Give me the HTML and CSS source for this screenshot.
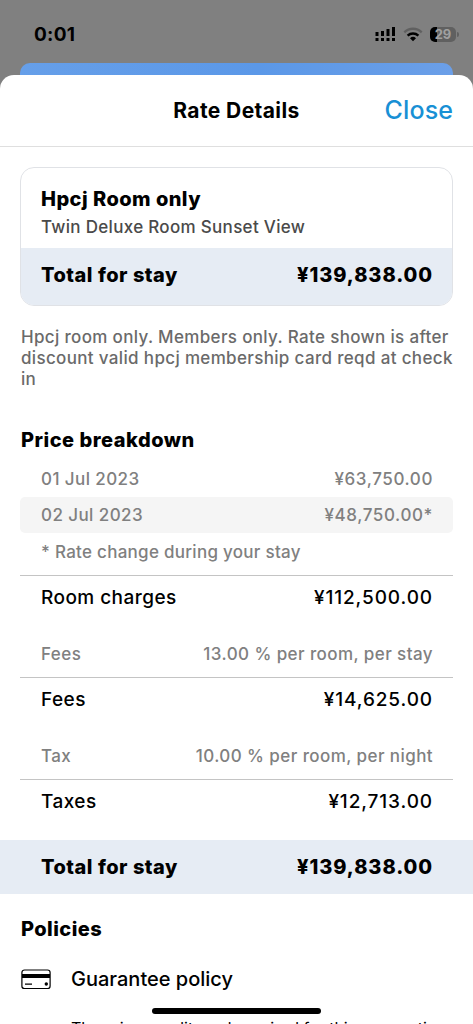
FILE: index.html
```html
<!DOCTYPE html>
<html lang="en">
<head>
    <meta charset="UTF-8">
    <meta name="viewport" content="width=device-width, initial-scale=1.0">
    <title>Rate Details</title>
    <link rel="stylesheet" href="styles.css">
</head>
<body>
    <div class="status-bar">
        <span class="clock">0:01</span>
        <div class="status-icons">
            <svg class="signal" width="21" height="15" viewBox="0 0 21 15">
                <path d="M0.5 5h3v4h-3zM6 4h3v5H6zM11.500 2h3v7h-3zM17 0h3v9h-3zM0.500 11h3v3h-3zM6 11h3v3H6zM11.500 11h3v3h-3zM17 11h3v3h-3z"/>
            </svg>
            <svg class="wifi" width="20" height="15" viewBox="0 0 20 15">
                <path class="wifi-off" d="M1.300 5.300a12.600 12.600 0 0 1 17.400 0"/>
                <path class="wifi-on" d="M4.600 8.600a7.900 7.900 0 0 1 10.800 0"/>
                <path d="M10 14.200l-3-3a4.300 4.300 0 0 1 6 0z"/>
            </svg>
            <div class="battery"><span class="battery-text">29</span></div>
        </div>
    </div>
    <div class="back-sheet"></div>

    <div class="sheet">
        <div class="header">
            <h1>Rate Details</h1>
            <a class="close">Close</a>
        </div>

        <div class="content">
            <div class="card">
                <div class="card-info">
                    <h2>Hpcj Room only</h2>
                    <p>Twin Deluxe Room Sunset View</p>
                </div>
                <div class="card-total">
                    <span>Total for stay</span>
                    <span class="price">¥139,838.00</span>
                </div>
            </div>

            <p class="description">Hpcj room only. Members only. Rate shown is after<br>discount valid hpcj membership card reqd at check<br>in</p>

            <h2 class="breakdown-title">Price breakdown</h2>
            <div class="row"><span>01 Jul 2023</span><span class="price">¥63,750.00</span></div>
            <div class="row shaded"><span>02 Jul 2023</span><span class="price">¥48,750.00*</span></div>
            <div class="row note"><span>* Rate change during your stay</span></div>
            <div class="row subtotal"><span>Room charges</span><span class="price">¥112,500.00</span></div>
            <div class="row detail"><span>Fees</span><span>13.00 % per room, per stay</span></div>
            <div class="row subtotal"><span>Fees</span><span class="price">¥14,625.00</span></div>
            <div class="row detail"><span>Tax</span><span>10.00 % per room, per night</span></div>
            <div class="row subtotal"><span>Taxes</span><span class="price">¥12,713.00</span></div>
        </div>

        <div class="grand-total">
            <span>Total for stay</span>
            <span class="price">¥139,838.00</span>
        </div>

        <div class="policies">
            <h2>Policies</h2>
            <div class="policy">
                <svg class="card-icon" width="30" height="21" viewBox="0 0 30 21">
                    <rect class="outline" x="0.900" y="1" width="28.200" height="18.500" rx="2.600"/>
                    <path d="M1 5h28v4H1zM4 14.500h7v1.200H4z"/>
                    <circle cx="25.300" cy="15" r="1.700"/>
                </svg>
                <div class="policy-text">
                    <h3>Guarantee policy</h3>
                    <p>There is a credit card required for this reservation</p>
                </div>
            </div>
        </div>
    </div>
    <div class="home-indicator"></div>
</body>
</html>
```
FILE: styles.css
```css
* {
  box-sizing: border-box;
}

body {
  margin: 0;
  height: 1024px;
  overflow: hidden;
  position: relative;
  background: #808080;
  color: #000;
  font-family: 'Inter', sans-serif;
  font-weight: 450;
  display: flex;
  flex-direction: column;
}

h1, h2, h3, p {
  margin: 0;
}

/* Status bar */
.status-bar {
  height: 63px;
  flex-shrink: 0;
  padding: 6px 14px 0 34px;
  display: flex;
  justify-content: space-between;
  align-items: center;
}

.clock {
  font-size: 19px;
  font-weight: 700;
  letter-spacing: 0.3px;
}

.status-icons {
  display: flex;
  align-items: center;
  gap: 7px;
}

.wifi-off, .wifi-on {
  fill: none;
  stroke: #000;
  stroke-width: 2.4;
}

.wifi-off {
  stroke: #606060;
}

.battery {
  position: relative;
  width: 26px;
  height: 15px;
  margin-right: 3px;
  border-radius: 5px;
  background: linear-gradient(90deg, #000 7px, #606060 7px);
  text-align: center;
}

.battery::after {
  content: "";
  position: absolute;
  right: -3px;
  top: 5px;
  width: 2px;
  height: 5px;
  border-radius: 0 2px 2px 0;
  background: #606060;
}

.battery-text {
  display: block;
  font-size: 13px;
  line-height: 15px;
  font-weight: 700;
  color: #a0a0a0;
}

/* Page behind the sheet */
.back-sheet {
  height: 30px;
  flex-shrink: 0;
  margin: 0 20px -18px;
  border-radius: 10px 10px 0 0;
  background: linear-gradient(90deg, #669fe9, #5b98e8 55%, #6b9fe8);
}

/* Sheet */
.sheet {
  flex: 1;
  min-height: 0;
  position: relative;
  overflow: hidden;
  border-radius: 14px 14px 0 0;
  background: #fff;
}

.header {
  height: 72px;
  border-bottom: 1px solid #dfdfdf;
  display: grid;
  grid-template-columns: 1fr auto 1fr;
  align-items: center;
  padding: 0 20px;
}

.header h1 {
  grid-column: 2;
  font-size: 21px;
  font-weight: 700;
  letter-spacing: 0.4px;
}

.close {
  justify-self: end;
  padding-bottom: 2px;
  font-size: 25px;
  letter-spacing: 0.1px;
  color: #1890d5;
}

.content {
  padding: 20px 20px 0;
}

.card {
  height: 139px;
  border: 1px solid #e0e2e6;
  border-radius: 14px;
  overflow: hidden;
}

.card-info {
  height: 80px;
  padding: 18px 20px 0;
}

h2 {
  font-size: 20px;
  line-height: 26px;
  font-weight: 800;
  letter-spacing: 0.45px;
}

.card-info p {
  font-size: 17px;
  line-height: 30px;
  letter-spacing: 0.31px;
  color: #4a4a4a;
}

.card-total, .grand-total {
  display: flex;
  justify-content: space-between;
  align-items: center;
  background: #e6ecf4;
  font-size: 20px;
  font-weight: 800;
  letter-spacing: 0.5px;
}

.card-total {
  height: 57px;
  padding: 0 19px 3px 20px;
}

.description {
  margin: 21px 0 0 1px;
  font-size: 17px;
  line-height: 21px;
  letter-spacing: 0.34px;
  color: #6a6a6a;
  white-space: nowrap;
}

.breakdown-title {
  margin: 37px 0 8px 1px;
  letter-spacing: 0.5px;
}

/* Price rows */
.row {
  height: 36px;
  padding: 0 20px 0 21px;
  display: flex;
  justify-content: space-between;
  align-items: center;
  font-size: 17px;
  letter-spacing: 0.42px;
  color: #808080;
  white-space: nowrap;
}

.price {
  letter-spacing: 0.6px;
}

.shaded {
  background: #f5f5f5;
  border-radius: 5px;
}

.note {
  height: 42px;
  padding-bottom: 5px;
  letter-spacing: 0.28px;
}

.subtotal {
  height: 43px;
  border-top: 1px solid #c4c4c4;
  font-size: 19px;
  font-weight: 500;
  letter-spacing: 0.45px;
  color: #000;
}

.subtotal .price, .card-total .price, .grand-total .price {
  letter-spacing: 0.9px;
}

.detail {
  height: 59px;
  padding-top: 12px;
}

.grand-total {
  height: 54px;
  margin-top: 18px;
  padding: 0 40px 0 41px;
}

/* Policies */
.policies {
  padding: 22px 20px 0 21px;
}

.policy {
  display: flex;
  gap: 20px;
  margin-top: 25px;
}

.card-icon {
  flex-shrink: 0;
  margin-top: 2px;
}

.card-icon .outline {
  fill: none;
  stroke: #000;
  stroke-width: 1.2;
}

.policy-text h3 {
  font-size: 20px;
  line-height: 24px;
  font-weight: 500;
}

.policy-text p {
  margin-top: 25px;
  font-size: 16px;
  line-height: 24px;
  font-weight: 400;
  white-space: nowrap;
}

.home-indicator {
  position: absolute;
  left: 152px;
  top: 1008px;
  width: 169px;
  height: 6px;
  border-radius: 3px;
  background: #000;
}
```
